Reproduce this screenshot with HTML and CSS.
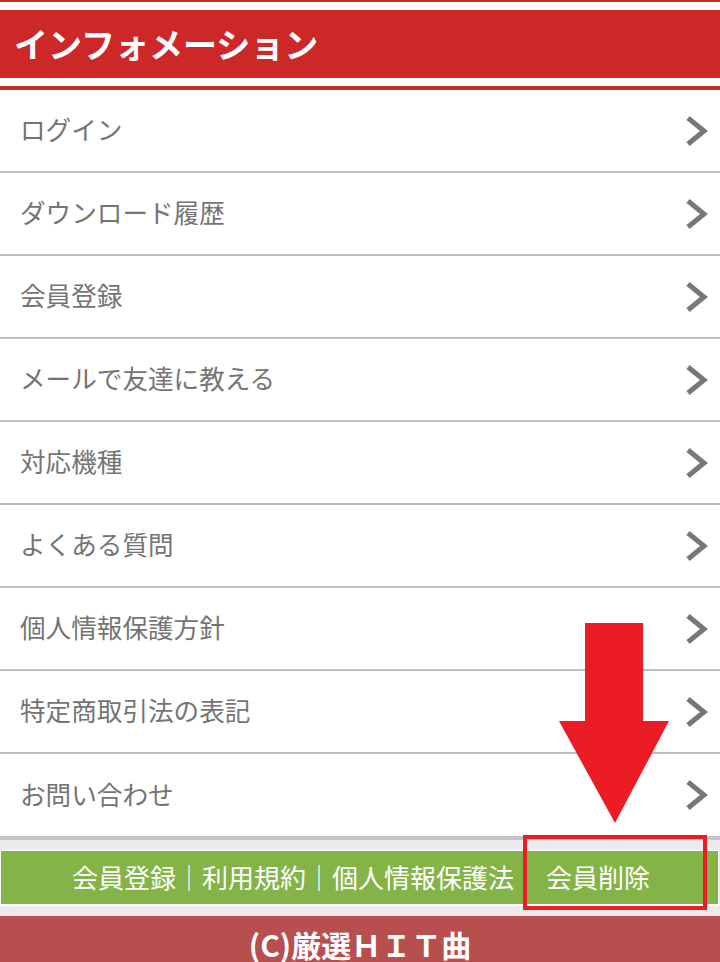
FILE: index.html
```html
<!DOCTYPE html>
<html lang="ja">
<head>
<meta charset="utf-8">
<title>インフォメーション</title>
<link rel="stylesheet" href="styles.css">
</head>
<body>
<header class="hd">
  <h1 class="hd-title">インフォメーション</h1>
</header>
<ul class="menu">
  <li class="row"><span class="label">ログイン</span><svg class="chev" viewBox="0 0 24 32"><polyline points="4,3 20,16 4,29"/></svg></li>
  <li class="row"><span class="label">ダウンロード履歴</span><svg class="chev" viewBox="0 0 24 32"><polyline points="4,3 20,16 4,29"/></svg></li>
  <li class="row"><span class="label">会員登録</span><svg class="chev" viewBox="0 0 24 32"><polyline points="4,3 20,16 4,29"/></svg></li>
  <li class="row"><span class="label">メールで友達に教える</span><svg class="chev" viewBox="0 0 24 32"><polyline points="4,3 20,16 4,29"/></svg></li>
  <li class="row"><span class="label">対応機種</span><svg class="chev" viewBox="0 0 24 32"><polyline points="4,3 20,16 4,29"/></svg></li>
  <li class="row"><span class="label">よくある質問</span><svg class="chev" viewBox="0 0 24 32"><polyline points="4,3 20,16 4,29"/></svg></li>
  <li class="row"><span class="label">個人情報保護方針</span><svg class="chev" viewBox="0 0 24 32"><polyline points="4,3 20,16 4,29"/></svg></li>
  <li class="row"><span class="label">特定商取引法の表記</span><svg class="chev" viewBox="0 0 24 32"><polyline points="4,3 20,16 4,29"/></svg></li>
  <li class="row last"><span class="label">お問い合わせ</span><svg class="chev" viewBox="0 0 24 32"><polyline points="4,3 20,16 4,29"/></svg></li>
</ul>
<div class="navwrap">
  <nav class="nav">
    <span class="links">会員登録｜利用規約｜個人情報保護法</span>
    <span class="del">会員削除</span>
    <span class="mark"></span>
  </nav>
</div>
<footer class="ft">(C)厳選ＨＩＴ曲</footer>
<svg class="arrow" viewBox="0 0 110 200" width="110" height="200"><polygon points="26,0 84,0 84,98 110,98 56,200 0,98 26,98"/></svg>
</body>
</html>
```

FILE: styles.css
```css
* { box-sizing: border-box; }
html, body { margin: 0; padding: 0; }
body {
  background: #fff;
  font-family: "Noto Sans CJK JP", "Noto Sans", sans-serif;
  width: 720px;
  position: relative;
  overflow: hidden;
}
.hd {
  border-top: 2px solid #cd2828;
  border-bottom: 4px solid #cd2828;
  padding: 8px 0;
}
.hd-title {
  margin: 0;
  height: 68px;
  background: #cd2828;
  color: #fff;
  font-size: 34px;
  font-weight: 700;
  line-height: 68px;
  padding-left: 14px;
  letter-spacing: 0;
}
.menu {
  list-style: none;
  margin: 0;
  padding: 0;
}
.row {
  display: flex;
  align-items: center;
  justify-content: space-between;
  height: 83px;
  border-bottom: 2px solid #bdbdbd;
  padding: 0 12px 0 20px;
}
.row.last {
  height: 86px;
  border-bottom: 4px solid #c4c4c4;
}
.label {
  color: #747474;
  font-size: 25.6px;
  line-height: 1;
  margin-bottom: 3px;
}
.chev {
  width: 24px;
  height: 32px;
  fill: none;
  stroke: #777;
  stroke-width: 5;
  stroke-linejoin: miter;
}
.navwrap {
  background: #ebebeb;
  padding: 10px 1px 10px 0;
}
.nav {
  position: relative;
  display: flex;
  align-items: center;
  height: 56px;
  background: #84b448;
  border: 1px solid #fff;
  border-width: 1px 1px 2px 1px;
  color: #fff;
  font-size: 26px;
  padding-left: 71px;
  padding-bottom: 3px;
}
.del { margin-left: 32px; }
.mark {
  position: absolute;
  left: 522px;
  top: -16px;
  width: 184px;
  height: 75px;
  border: 4px solid #ec1c24;
}
.ft {
  background: #b84f4f;
  color: #fff;
  font-weight: 700;
  font-size: 30px;
  text-align: center;
  height: 64px;
  padding-top: 9px;
  line-height: 38px;
}
.arrow {
  position: absolute;
  left: 559px;
  top: 623px;
  fill: #ec1c24;
}
```
